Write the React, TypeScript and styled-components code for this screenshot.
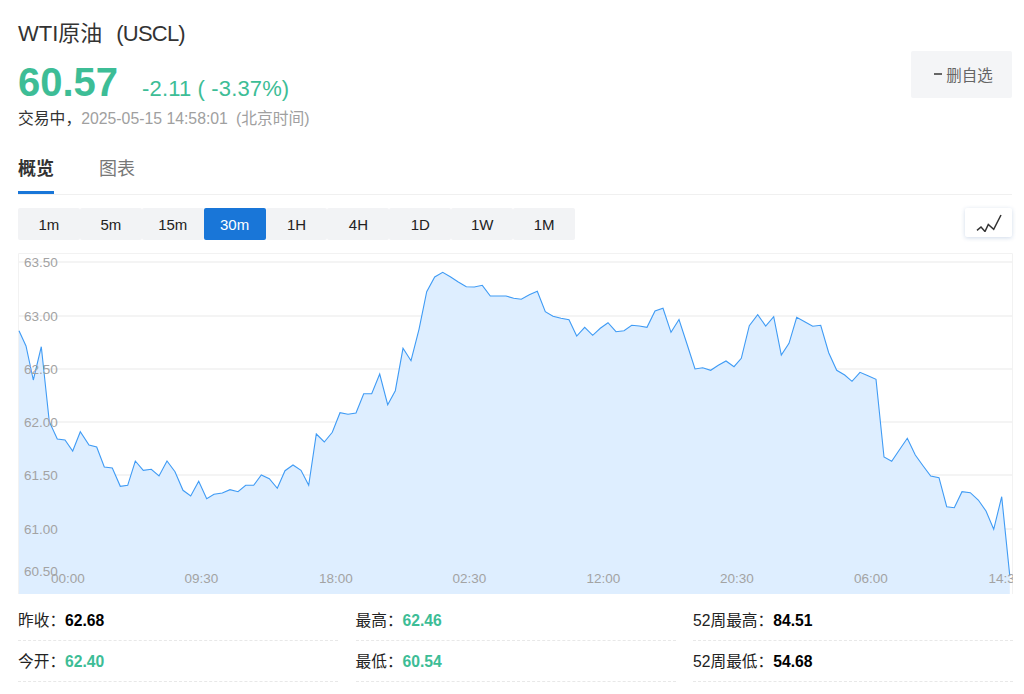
import styled, { createGlobalStyle } from 'styled-components';

const GlobalStyle = createGlobalStyle`
  html, body {
    margin: 0;
    padding: 0;
    background: #fff;
  }
  body {
    font-family: "Liberation Sans", "Noto Sans CJK SC", sans-serif;
    color: #333;
  }
`;

const Page = styled.div`
  width: 1024px;
  height: 694px;
  box-sizing: border-box;
  padding: 18px 12px 0 18px;
  overflow: hidden;
`;

const Header = styled.header`
  display: flex;
  justify-content: space-between;
  align-items: flex-start;
  height: 127px;
`;

const Title = styled.h1`
  margin: 0;
  font-size: 22px;
  font-weight: 400;
  line-height: 32px;
  color: #333;
`;

const Symbol = styled.span`
  margin-left: 14px;
  letter-spacing: -0.8px;
`;

const Quote = styled.div`
  display: flex;
  align-items: baseline;
  margin-top: 9px;
  height: 46px;
  line-height: 46px;
  color: #3dbd96;
`;

const Price = styled.span`
  font-size: 40px;
  font-weight: 700;
`;

const Delta = styled.span`
  margin-left: 24px;
  font-size: 22px;
  letter-spacing: 0.14px;
`;

const Status = styled.div`
  margin-top: 4px;
  font-size: 15.8px;
  line-height: 20px;
  color: #333;
`;

const Time = styled.span`
  color: #a0a0a0;
`;

const Zone = styled.span`
  margin-left: 8px;
  color: #a0a0a0;
`;

const WatchButton = styled.button`
  margin-top: 33px;
  width: 101px;
  height: 47px;
  padding: 0 0 1px 4px;
  border: 0;
  border-radius: 2px;
  background: #f4f5f7;
  color: #666;
  font-family: inherit;
  font-size: 15.5px;
  display: flex;
  align-items: center;
  justify-content: center;
  gap: 4px;
`;

const Minus = styled.span`
  width: 8px;
  height: 1.5px;
  background: #666;
`;

const Tabs = styled.nav`
  display: flex;
  gap: 45px;
  height: 49px;
  border-bottom: 1px solid #f0f0f0;
  box-sizing: content-box;
`;

const Tab = styled.a<{ $active?: boolean }>`
  height: 49px;
  box-sizing: border-box;
  padding-top: 13px;
  font-size: 18px;
  line-height: 22px;
  font-weight: ${({ $active }) => ($active ? 700 : 400)};
  color: ${({ $active }) => ($active ? '#333' : '#777')};
  border-bottom: 3px solid ${({ $active }) => ($active ? '#1976d8' : 'transparent')};
`;

const Toolbar = styled.div`
  display: flex;
  justify-content: space-between;
  align-items: flex-start;
  margin-top: 13px;
  height: 45px;
`;

const Ranges = styled.div`
  display: flex;
`;

const RangeButton = styled.button<{ $active?: boolean }>`
  width: 61.9px;
  height: 32px;
  padding: 0;
  border: 0;
  border-radius: 2px;
  font-family: inherit;
  font-size: 15px;
  background: ${({ $active }) => ($active ? '#1976d8' : '#f2f3f5')};
  color: ${({ $active }) => ($active ? '#fff' : '#222')};
`;

const ChartToggle = styled.button`
  width: 47px;
  height: 29px;
  padding: 0;
  border: 0;
  border-radius: 2px;
  background: #fff;
  box-shadow: 0 1px 4px rgba(40, 90, 160, 0.22);
  display: flex;
  align-items: center;
  justify-content: center;
`;

const ChartFrame = styled.div`
  width: 995px;
  height: 341px;
  line-height: 0;
`;

const AxisText = styled.text`
  font-size: 13.5px;
  fill: #a3a3a3;
`;

const Stats = styled.section`
  display: grid;
  grid-template-columns: repeat(3, 320px);
  column-gap: 17.5px;
  margin-top: 6px;
`;

const Stat = styled.div`
  height: 41px;
  box-sizing: border-box;
  border-bottom: 1px dashed #e8e8e8;
  font-size: 15.7px;
  line-height: 42px;
  color: #222;
`;

const StatValue = styled.b<{ $green?: boolean }>`
  font-weight: 700;
  color: ${({ $green }) => ($green ? '#3dbd96' : '#000')};
`;

const POINTS: [number, number][] = [
  [19, 330.7], [26, 346], [33.3, 380], [41.3, 346.7], [49.3, 421.7], [57.3, 439], [65, 440], [72.7, 451],
  [80.3, 431.7], [89, 445], [96.7, 447], [104.3, 467], [112.3, 468], [120.3, 486.3], [127.7, 485.3],
  [135.3, 461], [143.3, 470.3], [151.3, 469.3], [159, 476], [167, 461], [175, 471.7], [183, 490.3],
  [190.7, 496], [198.7, 481.3], [206.7, 498.7], [214, 494.3], [222.3, 493], [230, 489.7], [238, 491.7],
  [245.7, 485.3], [253.7, 485.3], [261.3, 475], [269.3, 478.7], [277.3, 488.3], [285, 470.7], [293, 465],
  [301, 470.3], [308.7, 485.3], [316.3, 434], [324.3, 442], [332.3, 432.3], [340, 412.7], [348, 414.3],
  [356, 413], [363.7, 393.7], [371.7, 393.7], [379.7, 374], [387.7, 404.7], [395.3, 390.7], [403, 348.3],
  [411, 360.7], [419, 329.3], [426.7, 291.7], [434.7, 277], [442.7, 272.3], [450.3, 276.7], [458.3, 282],
  [466.3, 286.7], [474.3, 287], [482.3, 285.3], [490.3, 296], [498, 296], [506, 296], [513.7, 298.3],
  [521.3, 299.3], [529.3, 294.7], [537.3, 291.3], [545.3, 311.7], [553, 316.3], [561, 318.3], [569, 319.7],
  [576.7, 336], [584.7, 327.3], [592.7, 335.3], [600.3, 328.3], [608, 322.7], [616, 331.7], [624, 330.7],
  [631.7, 325.3], [639.3, 326], [647, 327.3], [655, 311], [663, 308.3], [671, 332.3], [679, 319.5],
  [687.3, 345], [695, 369], [702.7, 367.7], [710.7, 370.3], [718.3, 365.3], [726, 361], [734, 366.7],
  [741.3, 358.3], [749.3, 325.7], [757.7, 314.7], [765.7, 326], [773.7, 316.7], [781.3, 355], [789, 343.3],
  [796.7, 317.3], [804.7, 321.7], [812.7, 326.3], [820.7, 325.3], [828.7, 352.7], [836.7, 370.3],
  [844.7, 375], [852, 381.3], [860, 372.3], [868, 375.7], [876, 379.3], [884, 457], [891.7, 461.3],
  [899.3, 450], [907.3, 438.3], [915.3, 455], [923, 465.7], [930.7, 476], [939, 477.7], [946.7, 506.7],
  [954.3, 507.7], [962, 491.7], [970.3, 492.7], [978.3, 500], [986, 511], [993.7, 529.3], [1001.7, 496.7],
  [1009.8, 576],
];

const line = POINTS.map(([x, y]) => `${x},${y}`).join(' ');
const area = `19,594 ${line} 1009.8,594`;

const Y_AXIS = [
  { label: '63.50', y: 262, labelY: 262 },
  { label: '63.00', y: 316, labelY: 316 },
  { label: '62.50', y: 369, labelY: 369 },
  { label: '62.00', y: 422, labelY: 422 },
  { label: '61.50', y: 475, labelY: 475 },
  { label: '61.00', y: 529, labelY: 529 },
  { label: '60.50', y: 582, labelY: 571 },
];

const X_AXIS = [
  { label: '00:00', x: 51 },
  { label: '09:30', x: 184.5 },
  { label: '18:00', x: 319 },
  { label: '02:30', x: 452.5 },
  { label: '12:00', x: 586.5 },
  { label: '20:30', x: 720 },
  { label: '06:00', x: 854 },
  { label: '14:30', x: 988.5 },
];

const RANGES = ['1m', '5m', '15m', '30m', '1H', '4H', '1D', '1W', '1M'];

const STATS = [
  { label: '昨收', value: '62.68' },
  { label: '最高', value: '62.46', green: true },
  { label: '52周最高', value: '84.51' },
  { label: '今开', value: '62.40', green: true },
  { label: '最低', value: '60.54', green: true },
  { label: '52周最低', value: '54.68' },
];

const PriceChart = () => (
  <ChartFrame>
    <svg width="995" height="341" viewBox="18 253 995 341">
      <path d="M18.5 594V253.5H1012.5V594" fill="none" stroke="#f2f2f2" />
      {Y_AXIS.map(({ label, y }) => (
        <line key={label} x1="19" x2="1012" y1={y} y2={y} stroke="#f4f4f4" strokeWidth="2" />
      ))}
      <polygon points={area} fill="#deeeff" />
      <polyline points={line} fill="none" stroke="#3f9bf5" strokeWidth="1.1" />
      {Y_AXIS.map(({ label, labelY }) => (
        <AxisText key={label} x="24" y={labelY + 5}>
          {label}
        </AxisText>
      ))}
      {X_AXIS.map(({ label, x }) => (
        <AxisText key={label} x={x} y="583">
          {label}
        </AxisText>
      ))}
    </svg>
  </ChartFrame>
);

const LineIcon = () => (
  <svg width="28" height="18" viewBox="974 213 28 18" fill="none" stroke="#333" strokeWidth="1.5">
    <polyline points="976,229.3 980,226 984,230.5 987.3,223.5 992.7,228.3 1000,214" />
  </svg>
);

export default function App() {
  return (
    <Page>
      <GlobalStyle />
      <Header>
        <div>
          <Title>
            WTI原油<Symbol>(USCL)</Symbol>
          </Title>
          <Quote>
            <Price>60.57</Price>
            <Delta>-2.11 ( -3.37%)</Delta>
          </Quote>
          <Status>
            交易中，<Time>2025-05-15 14:58:01</Time>
            <Zone>(北京时间)</Zone>
          </Status>
        </div>
        <WatchButton>
          <Minus />
          删自选
        </WatchButton>
      </Header>

      <Tabs>
        <Tab $active>概览</Tab>
        <Tab>图表</Tab>
      </Tabs>

      <Toolbar>
        <Ranges>
          {RANGES.map((range) => (
            <RangeButton key={range} $active={range === '30m'}>
              {range}
            </RangeButton>
          ))}
        </Ranges>
        <ChartToggle>
          <LineIcon />
        </ChartToggle>
      </Toolbar>

      <PriceChart />

      <Stats>
        {STATS.map((stat) => (
          <Stat key={stat.label}>
            {stat.label}：<StatValue $green={stat.green}>{stat.value}</StatValue>
          </Stat>
        ))}
      </Stats>
    </Page>
  );
}
